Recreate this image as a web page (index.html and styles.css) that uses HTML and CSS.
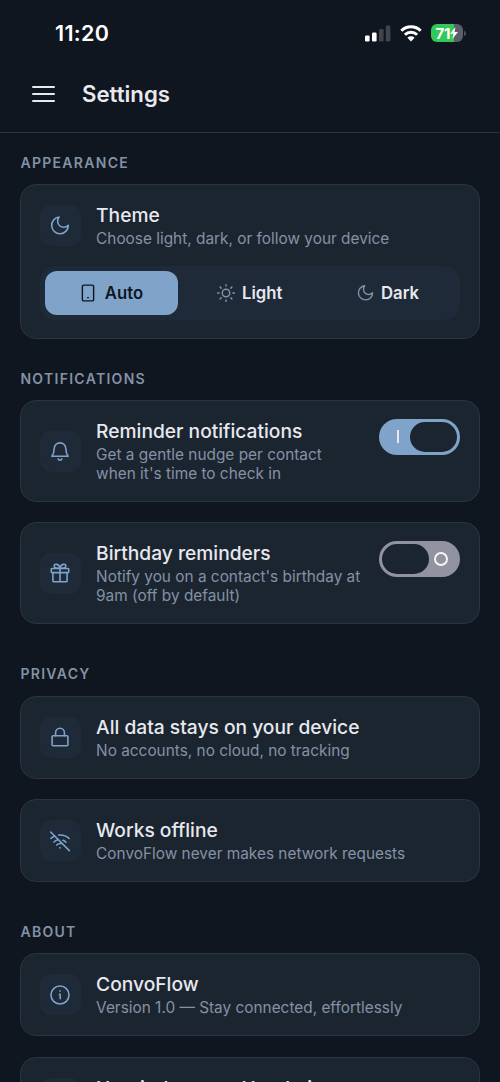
FILE: index.html
```html
<!DOCTYPE html>
<html lang="en">
<head>
<meta charset="utf-8">
<title>Settings</title>
<link rel="stylesheet" href="styles.css">
</head>
<body>
<svg width="0" height="0" class="defs">
  <symbol id="moon" viewBox="0 0 24 24"><path d="M11 2.500a6.900 6.900 0 0 0 11 9.800A10 10 0 1 1 11 2.500z"/></symbol>
</svg>
<div class="status">
  <span class="time">11:20</span>
  <div class="indicators">
    <svg class="signal" width="26" height="17" viewBox="0 0 26 17"><rect x="0" y="10.500" width="4.600" height="6" rx="1.300" fill="#fff"/><rect x="7" y="7.500" width="4.600" height="9" rx="1.300" fill="#fff"/><rect x="14" y="4" width="4.600" height="12.500" rx="1.300" fill="#41444d"/><rect x="20.800" y=".5" width="4.600" height="16" rx="1.300" fill="#41444d"/></svg>
    <svg class="wifi" width="22" height="17" viewBox="0 0 22 17"><g fill="none" stroke="#fff" stroke-width="3"><path d="M1.300 5.800a13.700 13.700 0 0 1 19.400 0"/><path d="M4.900 9.700a8.700 8.700 0 0 1 12.200 0"/></g><path d="M7.400 12.800a5.200 5.200 0 0 1 7.200 0L11 16.500z" fill="#fff"/></svg>
    <div class="battery"><span>71</span><svg width="8" height="12" viewBox="0 0 8 12"><path d="M5.400 0L0 6.800h3.300L2.400 12 8 5H4.600z" fill="#fff"/></svg></div><i class="cap"></i>
  </div>
</div>
<header class="topbar">
  <div class="menu"><i></i><i></i><i></i></div>
  <h1>Settings</h1>
</header>
<main>
  <section>
    <h2>APPEARANCE</h2>
    <div class="card theme">
      <div class="row">
        <div class="tile"><svg class="icon"><use href="#moon"/></svg></div>
        <div class="copy"><h3>Theme</h3><p>Choose light, dark, or follow your device</p></div>
      </div>
      <div class="segments">
        <div class="segment active"><svg class="icon" viewBox="0 0 24 24"><rect x="4.500" y="1.500" width="15" height="21" rx="1.500"/><path d="M11.500 18.200h1"/></svg>Auto</div>
        <div class="segment"><svg class="icon" viewBox="0 0 24 24"><circle cx="12" cy="12" r="5"/><path d="M12 .8v2M12 21.200v2M.8 12h2M21.200 12h2M4.100 4.100l1.400 1.400M18.500 18.500l1.400 1.400M4.100 19.900l1.400-1.400M18.500 5.500l1.400-1.400"/></svg>Light</div>
        <div class="segment"><svg class="icon dim-moon"><use href="#moon"/></svg>Dark</div>
      </div>
    </div>
  </section>
  <section>
    <h2>NOTIFICATIONS</h2>
    <div class="card">
      <div class="row">
        <div class="tile"><svg class="icon" viewBox="0 0 24 24"><path d="M2.200 18.200h19.600c-2-2.500-2.800-4-2.800-9a7 7 0 0 0-14 0c0 5-.8 6.500-2.800 9zM9.700 21.500a2.500 2.500 0 0 0 4.600 0"/></svg></div>
        <div class="copy"><h3>Reminder notifications</h3><p>Get a gentle nudge per contact<br>when it's time to check in</p></div>
        <div class="toggle on"><i class="bar"></i><i class="knob"></i></div>
      </div>
    </div>
    <div class="card">
      <div class="row">
        <div class="tile"><svg class="icon" viewBox="0 0 24 24"><rect x="1.500" y="6.500" width="21" height="5" rx="1"/><path d="M3.500 11.500v10q0 1 1 1h15q1 0 1-1v-10M12 6.500v16M12 6.500C7 6.500 5 5.500 5 3.500c0-3 6-3 7 3c1-6 7-6 7-3c0 2-2 3-7 3"/></svg></div>
        <div class="copy"><h3>Birthday reminders</h3><p>Notify you on a contact's birthday at<br>9am (off by default)</p></div>
        <div class="toggle"><i class="knob"></i><i class="ring"></i></div>
      </div>
    </div>
  </section>
  <section>
    <h2>PRIVACY</h2>
    <div class="card">
      <div class="row">
        <div class="tile"><svg class="icon" viewBox="0 0 24 24"><rect x="2.500" y="10.500" width="19" height="12" rx="1.200"/><path d="M6.700 10.500V6.800a5.300 5.300 0 0 1 10.600 0v3.700"/></svg></div>
        <div class="copy"><h3>All data stays on your device</h3><p>No accounts, no cloud, no tracking</p></div>
      </div>
    </div>
    <div class="card">
      <div class="row">
        <div class="tile"><svg class="icon" viewBox="0 0 24 24"><path d="M.8 1.200l22.400 22.300M10.500 4.900c4.500-.5 9 .9 12.500 4.100M1 9a16 16 0 0 1 4.700-3M15.500 11.200q2 .7 3.700 2.300M4.700 13.200a11 11 0 0 1 4.700-2.700M8.200 16.700a6 6 0 0 1 5-1.700M11.800 20.200h.4"/></svg></div>
        <div class="copy"><h3>Works offline</h3><p>ConvoFlow never makes network requests</p></div>
      </div>
    </div>
  </section>
  <section>
    <h2>ABOUT</h2>
    <div class="card">
      <div class="row">
        <div class="tile"><svg class="icon" viewBox="0 0 24 24"><circle cx="12" cy="12" r="10.800"/><path d="M11.200 11h1v5.500M11.800 7.300h.2"/></svg></div>
        <div class="copy"><h3>ConvoFlow</h3><p>Version 1.0 — Stay connected, effortlessly</p></div>
      </div>
    </div>
    <div class="card">
      <div class="row">
        <div class="tile"></div>
        <div class="copy"><h3>Harvinder seen Handmi</h3><p>&nbsp;</p></div>
      </div>
    </div>
  </section>
</main>
</body>
</html>
```
FILE: styles.css
```css
* { box-sizing: border-box; }
html { background: #0f161f; }
body { margin: 0; width: 500px; height: 1082px; overflow: hidden; background: #0f161f; color: #e8e8ef; font-family: Inter, sans-serif; }
h1, h2, h3, p { margin: 0; }
.defs { display: block; position: absolute; }
.status { height: 66px; padding: 0 34px 0 55px; display: flex; align-items: center; justify-content: space-between; }
.time { color: #fff; font-size: 21.500px; font-weight: 600; letter-spacing: .3px; }
.indicators { display: flex; align-items: center; }
.wifi { margin-left: 9px; }
.battery { width: 32px; height: 18px; margin-left: 9px; border-radius: 6px; background: linear-gradient(90deg, #34c759 0 23px, #5b5e67 23px); display: flex; align-items: center; justify-content: center; color: #fff; font-size: 15px; font-weight: 700; letter-spacing: -.2px; }
.cap { width: 2px; height: 5px; margin-left: 1px; border-radius: 0 2px 2px 0; background: #4d5059; }
.topbar { height: 67px; padding: 0 32px 11px; display: flex; align-items: center; border-bottom: 1px solid #293543; }
.menu { width: 23px; display: flex; flex-direction: column; gap: 5px; }
.menu i { height: 2px; border-radius: 1px; background: #e8e8ef; }
h1 { margin-left: 27px; font-size: 22.200px; font-weight: 600; line-height: 30px; }
main { padding: 20.500px 20.400px 0; }
section { margin-bottom: 31px; }
section + section { margin-bottom: 40.800px; }
section:nth-child(2) { margin-bottom: 41.200px; }
h2 { height: 18px; margin-bottom: 12.500px; color: #8491a5; font-size: 14px; font-weight: 600; line-height: 18px; letter-spacing: 1.300px; }
.card { min-height: 83px; padding: 18px 18.700px; border: 1.300px solid #293543; border-radius: 16px; background: #1b2530; }
.card + .card { margin-top: 20.400px; }
section:nth-child(2) .card + .card { margin-top: 20px; }
.row { display: flex; align-items: center; }
.tile { flex: none; width: 41px; height: 41px; margin-right: 15px; padding-right: 1px; border-radius: 11px; background: #1e2a37; display: flex; align-items: center; justify-content: center; }
.icon { width: 20px; height: 20px; fill: none; stroke: #7fa3cd; stroke-width: 1.900; stroke-linecap: round; stroke-linejoin: round; overflow: visible; }
.copy { flex: 1; white-space: nowrap; }
h3 { font-size: 19.200px; font-weight: 500; line-height: 24px; }
p { margin-top: 3px; margin-bottom: -1px; color: #8491a5; font-size: 15.380px; line-height: 18.900px; }
.segments { height: 54px; margin-top: 18px; padding: 5px; border-radius: 15px; background: #1e2a37; display: grid; grid-template-columns: repeat(3, 1fr); gap: 5px; }
.segment { display: flex; align-items: center; justify-content: center; gap: 7.500px; padding-right: 1px; border-radius: 12px; font-size: 16.700px; font-weight: 600; }
.segment .icon { width: 18px; height: 18px; stroke: #8491a5; }
.segment .dim-moon { width: 17px; height: 17px; }
.segment.active .icon { stroke: #0f161f; }
.active { background: #80a3ca; color: #0f161f; }
.toggle { align-self: flex-start; position: relative; flex: none; width: 81px; height: 36px; border-radius: 18px; background: #9293a0; }
.toggle.on { background: #80a3ca; }
.knob { position: absolute; left: 3px; top: 3px; width: 47px; height: 30px; border-radius: 15px; background: #1b2530; }
.on .knob { left: 31px; }
.bar { position: absolute; left: 18px; top: 11px; width: 2px; height: 13px; background: #e8e8ef; }
.ring { position: absolute; left: 55px; top: 11px; width: 14px; height: 14px; border: 2px solid #f4f4f7; border-radius: 50%; }
```
